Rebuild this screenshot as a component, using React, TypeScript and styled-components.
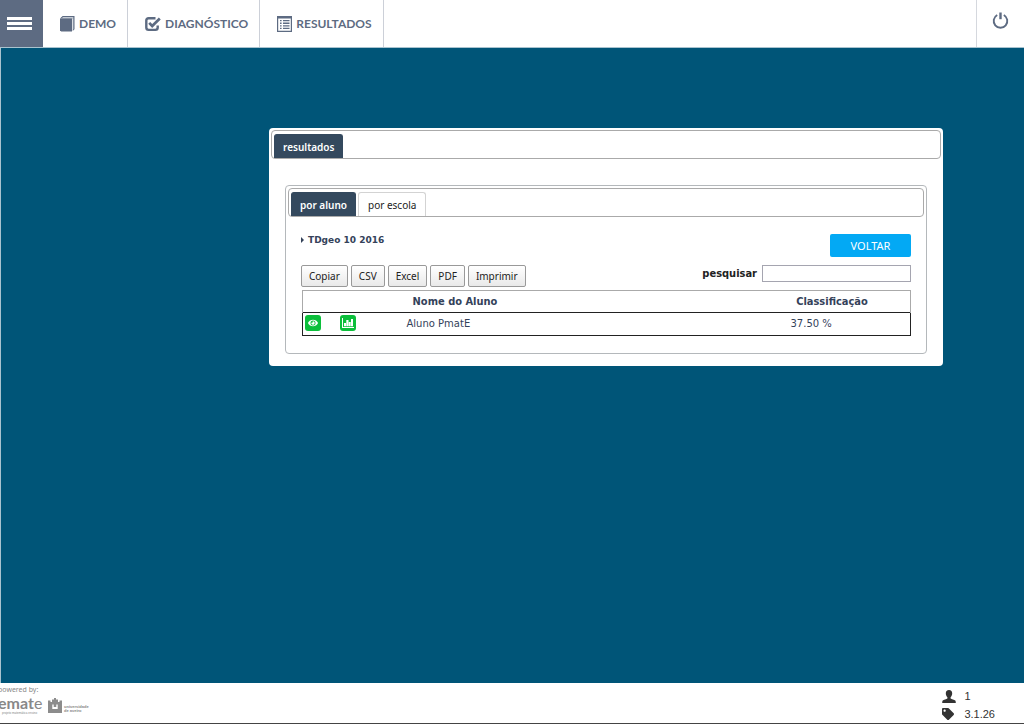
import React from "react";
import styled, { createGlobalStyle } from "styled-components";
import { FaEye, FaTag } from "react-icons/fa";

const slate = "#5d6b82";
const navy = "#34495e";
const condensed = `"DejaVu Sans Condensed", "DejaVu Sans", sans-serif`;

const GlobalStyle = createGlobalStyle`
  *, *::before, *::after { box-sizing: border-box; }
  body { margin: 0; background: #005578; font-family: "DejaVu Sans", sans-serif; font-size: 10px; color: #34425a; }
  button, input { font: inherit; margin: 0; }
`;

const Page = styled.div`
  min-height: 100vh;
  display: flex;
  flex-direction: column;
`;

const TopBar = styled.header`
  display: flex;
  height: 48px;
  background: #fff;
  border-bottom: 1px solid #a9c3cf;
`;

const MenuButton = styled.button`
  width: 43px;
  height: 47px;
  border: 0;
  padding: 0 0 0 7px;
  background: ${slate};
  display: flex;
  flex-direction: column;
  justify-content: center;
  gap: 2px;
`;

const MenuBar = styled.span`
  width: 25px;
  height: 3px;
  background: #fff;
`;

const Nav = styled.nav`
  display: flex;
  flex: 1;
`;

const NavLink = styled.a`
  display: flex;
  align-items: center;
  gap: 4px;
  padding: 0 11px 0 17px;
  border-right: 1px solid #ccd0d8;
  color: ${slate};
  font: 700 12px/16px Lato, sans-serif;
  text-decoration: none;
`;

const PowerButton = styled.button`
  width: 48px;
  border: 0;
  border-left: 1px solid #d5d8de;
  padding: 0 0 7px;
  background: #fff;
  color: ${slate};
  display: flex;
  align-items: center;
  justify-content: center;
`;

const Main = styled.main`
  flex: 1;
  border-left: 1px solid #a9c3cf;
  padding: 80px 81px 40px 268px;
`;

const Card = styled.section`
  background: #fff;
  border-radius: 4px;
  padding: 2px 2px 12px;
`;

const InnerCard = styled.section`
  margin: 26px 14px 0;
  border: 1px solid #b4b8bb;
  border-radius: 4px;
  padding: 2px 2px 17px;
`;

const TabStrip = styled.div`
  display: flex;
  align-items: flex-end;
  gap: 2px;
  height: 29px;
  padding: 0 2px;
  border: 1px solid #aaa;
  border-radius: 4px;
`;

const Tab = styled.button<{ $active?: boolean }>`
  height: 24px;
  padding: 0 ${(p) => (p.$active ? 8 : 9)}px;
  border: 1px solid ${(p) => (p.$active ? navy : "#d3d3d3")};
  border-bottom: 0;
  border-radius: 3px 3px 0 0;
  background: ${(p) => (p.$active ? navy : "#fff")};
  color: ${(p) => (p.$active ? "#fff" : "#222")};
  font: ${(p) => (p.$active ? 600 : 400)} 10px/16px "Noto Sans", sans-serif;
`;

const Panel = styled.div`
  padding: 17px 13px 0;
`;

const TitleRow = styled.div`
  display: flex;
  justify-content: space-between;
  align-items: flex-start;
`;

const Title = styled.h1`
  display: flex;
  align-items: center;
  gap: 4px;
  margin: 0;
  font-size: 9px;
  line-height: 12px;
  font-weight: 700;
`;

const BackButton = styled.button`
  width: 81px;
  height: 23px;
  border: 0;
  border-radius: 2px;
  background: #03a9f4;
  color: #fff;
  font: 400 11px/16px "Noto Sans", sans-serif;
`;

const Tools = styled.div`
  display: flex;
  justify-content: space-between;
  align-items: flex-start;
  margin-top: 8px;
`;

const Exports = styled.div`
  display: flex;
  gap: 3px;
`;

const ExportButton = styled.button`
  height: 22px;
  padding: 0 7px;
  border: 1px solid #999;
  border-radius: 2px;
  background: linear-gradient(#fff, #e9e9e9);
  color: #222;
  font: 400 10px/16px "Noto Sans", sans-serif;
`;

const Search = styled.label`
  display: flex;
  align-items: center;
  gap: 5px;
  color: #222;
  font: 700 11px/16px ${condensed};
`;

const SearchInput = styled.input`
  width: 149px;
  height: 17px;
  border: 1px solid #a5a5b0;
  padding: 0 4px;
`;

const Results = styled.table`
  width: calc(100% - 1px);
  margin: 3px 0 0 1px;
  border-collapse: collapse;
  table-layout: fixed;
  thead { border: 1px solid #aaa; border-bottom: 0; }
  tbody { border: 1px solid #222; }
`;

const Th = styled.th<{ $w?: string }>`
  width: ${(p) => p.$w ?? "auto"};
  height: 22px;
  padding: 0;
  text-align: center;
  font: 700 11px/16px ${condensed};
`;

const Td = styled.td`
  height: 23px;
  padding: 0 2px 2px;
`;

const Action = styled.button`
  display: flex;
  align-items: center;
  justify-content: center;
  width: 16px;
  height: 16px;
  border: 0;
  border-radius: 3px;
  padding: 0;
  background: #0cbf3b;
  color: #fff;
`;

const Footer = styled.footer`
  display: flex;
  justify-content: space-between;
  height: 41px;
  background: #fff;
  border-bottom: 1px solid #444;
  overflow: hidden;
`;

const Credits = styled.div`
  padding-top: 2px;
  color: #888;
`;

const Caption = styled.div`
  margin-left: -2px;
  font: 400 7px/10px "Noto Sans", sans-serif;
`;

const Logos = styled.div`
  display: flex;
  align-items: flex-start;
`;

const MateLogo = styled.div`
  width: 50px;
  margin-left: -2px;
`;

const MateName = styled.div`
  font: 700 16px/16px Lato, sans-serif;
`;

const Thin = styled.span`
  font-weight: 400;
`;

const Tagline = styled.div`
  padding-left: 4px;
  font: 400 3px/4px "Liberation Sans", sans-serif;
`;

const University = styled.div`
  display: flex;
  align-items: flex-end;
  gap: 2px;
  padding-top: 3px;
  font: 700 4px/4px "Liberation Sans", sans-serif;
`;

const Stats = styled.dl`
  margin: 0;
  padding: 4px 29px 0 0;
  color: #333;
  font: 400 11px/18px "Liberation Sans", sans-serif;
`;

const Stat = styled.div`
  display: flex;
  align-items: center;
  gap: 8px;
`;

const StatIcon = styled.dt`
  display: flex;
  width: 14px;
`;

const StatValue = styled.dd`
  margin: 0;
`;

const BookIcon = () => (
  <svg width="15" height="16" viewBox="0 0 15 16" fill={slate} aria-hidden="true">
    <path d="M0 2.600 2.600 0H14.500V13.200L12.700 15V2.600z" />
    <path d="M1.800 2.200 3 1.100h10.300v1.100z" fill="#c3cad4" />
    <path d="M12.400 2.200h.9v11l-.9.900z" fill="#e4e8ed" />
    <path d="M0 2.600h12V15.500H1.200L0 14.300z" />
  </svg>
);

const CheckIcon = () => (
  <svg width="16" height="16" viewBox="0 0 16 16" fill="none" stroke={slate} aria-hidden="true">
    <path d="M10.500 2.300H3.600Q1.300 2.300 1.300 4.600v7Q1.300 13.900 3.600 13.900h6.800q2.300 0 2.300-2.300V9.500" strokeWidth="2.400" />
    <path d="m4.200 6.800 3 3.200L14.800 2.500" strokeWidth="2.700" />
  </svg>
);

const ListIcon = () => (
  <svg width="15" height="16" viewBox="0 0 15 16" fill={slate} aria-hidden="true">
    <path fillRule="evenodd" d="M0 0h15v16H0zM1.200 2.600v12.200h12.600V2.600z" />
    <path d="M3 4h1.600v1.300H3zM6 4h6.500v1.300H6zM3 6.600h1.600v1.300H3zM6 6.600h6.500v1.300H6zM3 9.200h1.600v1.300H3zM6 9.200h6.500v1.300H6zM3 11.800h1.600v1.300H3zM6 11.800h6.500v1.300H6z" />
  </svg>
);

const PowerIcon = () => (
  <svg width="17" height="17" viewBox="0 0 17 17" fill="none" stroke="currentColor" aria-hidden="true">
    <path d="M5.200 3A6.800 6.800 0 1 0 11.800 3" strokeWidth="1.900" />
    <path d="M8.500.5v6.700" strokeWidth="2.400" />
  </svg>
);

const ChartIcon = () => (
  <svg width="12" height="10" viewBox="0 0 12 10" fill="currentColor" aria-hidden="true">
    <path d="M0 0h1v9h11v1H0zM2 5h2v3.200H2zM4.300 2h2.200v6.200H4.300zM6.800 4h1.900v4.200H6.800zM9 1h2v7.200H9z" />
  </svg>
);

const UserIcon = () => (
  <svg width="14" height="13" viewBox="0 0 14 13" fill="currentColor" aria-hidden="true">
    <path d="M7 0c2.200 0 3.200 1.400 3.200 3.300 0 1.700-.7 3.200-1.600 4v1.100c1 .8 3.800 1.200 4.700 2.200.4.500.5 1.400.5 2.400H.2c0-1 .1-1.900.5-2.400.9-1 3.700-1.400 4.700-2.200V7.300c-.9-.8-1.600-2.300-1.600-4C3.800 1.400 4.800 0 7 0z" />
  </svg>
);

const CrestIcon = () => (
  <svg width="14" height="15" viewBox="0 0 14 15" fill="#8c8c8c" aria-hidden="true">
    <path fillRule="evenodd" d="M0 2.500h2.500V4H4V1.500h2V0h2v1.500h2V4h1.500V2.500H14V15H0zM4.300 6.500V11h5.400V6.500H8.300V9H5.700V6.500z" />
  </svg>
);

const navItems = [
  { label: "DEMO", icon: <BookIcon /> },
  { label: "DIAGNÓSTICO", icon: <CheckIcon /> },
  { label: "RESULTADOS", icon: <ListIcon /> },
];

export default function App() {
  return (
    <Page>
      <GlobalStyle />
      <TopBar>
        <MenuButton aria-label="Menu"><MenuBar /><MenuBar /><MenuBar /></MenuButton>
        <Nav>
          {navItems.map((n) => (
            <NavLink href="#" key={n.label}>{n.icon}{n.label}</NavLink>
          ))}
        </Nav>
        <PowerButton aria-label="Sair"><PowerIcon /></PowerButton>
      </TopBar>
      <Main>
        <Card>
          <TabStrip role="tablist">
            <Tab role="tab" aria-selected $active>resultados</Tab>
          </TabStrip>
          <InnerCard>
            <TabStrip role="tablist">
              <Tab role="tab" aria-selected $active>por aluno</Tab>
              <Tab role="tab">por escola</Tab>
            </TabStrip>
            <Panel>
              <TitleRow>
                <Title>
                  <svg width="3" height="6" viewBox="0 0 3 6" fill="currentColor" aria-hidden="true"><path d="M0 0l3 3-3 3z" /></svg>
                  TDgeo 10 2016
                </Title>
                <BackButton>VOLTAR</BackButton>
              </TitleRow>
              <Tools>
                <Exports>
                  {["Copiar", "CSV", "Excel", "PDF", "Imprimir"].map((t) => (
                    <ExportButton key={t}>{t}</ExportButton>
                  ))}
                </Exports>
                <Search>pesquisar<SearchInput type="search" /></Search>
              </Tools>
              <Results>
                <thead>
                  <tr>
                    <Th $w="35px" aria-label="Ver" />
                    <Th $w="67px" aria-label="Gráfico" />
                    <Th $w="101px">Nome do Aluno</Th>
                    <Th />
                    <Th $w="87px">Classificação</Th>
                    <Th $w="35px" />
                  </tr>
                </thead>
                <tbody>
                  <tr>
                    <Td><Action aria-label="Ver"><FaEye size={10} /></Action></Td>
                    <Td><Action aria-label="Gráfico"><ChartIcon /></Action></Td>
                    <Td>Aluno PmatE</Td>
                    <Td />
                    <Td>37.50 %</Td>
                    <Td />
                  </tr>
                </tbody>
              </Results>
            </Panel>
          </InnerCard>
        </Card>
      </Main>
      <Footer>
        <Credits>
          <Caption>powered by:</Caption>
          <Logos>
            <MateLogo>
              <MateName>emat<Thin>e</Thin></MateName>
              <Tagline>projeto matemática ensino</Tagline>
            </MateLogo>
            <University><CrestIcon /><span>universidade<br />de aveiro</span></University>
          </Logos>
        </Credits>
        <Stats>
          <Stat><StatIcon aria-label="Utilizadores"><UserIcon /></StatIcon><StatValue>1</StatValue></Stat>
          <Stat><StatIcon aria-label="Versão"><FaTag size={12} /></StatIcon><StatValue>3.1.26</StatValue></Stat>
        </Stats>
      </Footer>
    </Page>
  );
}
